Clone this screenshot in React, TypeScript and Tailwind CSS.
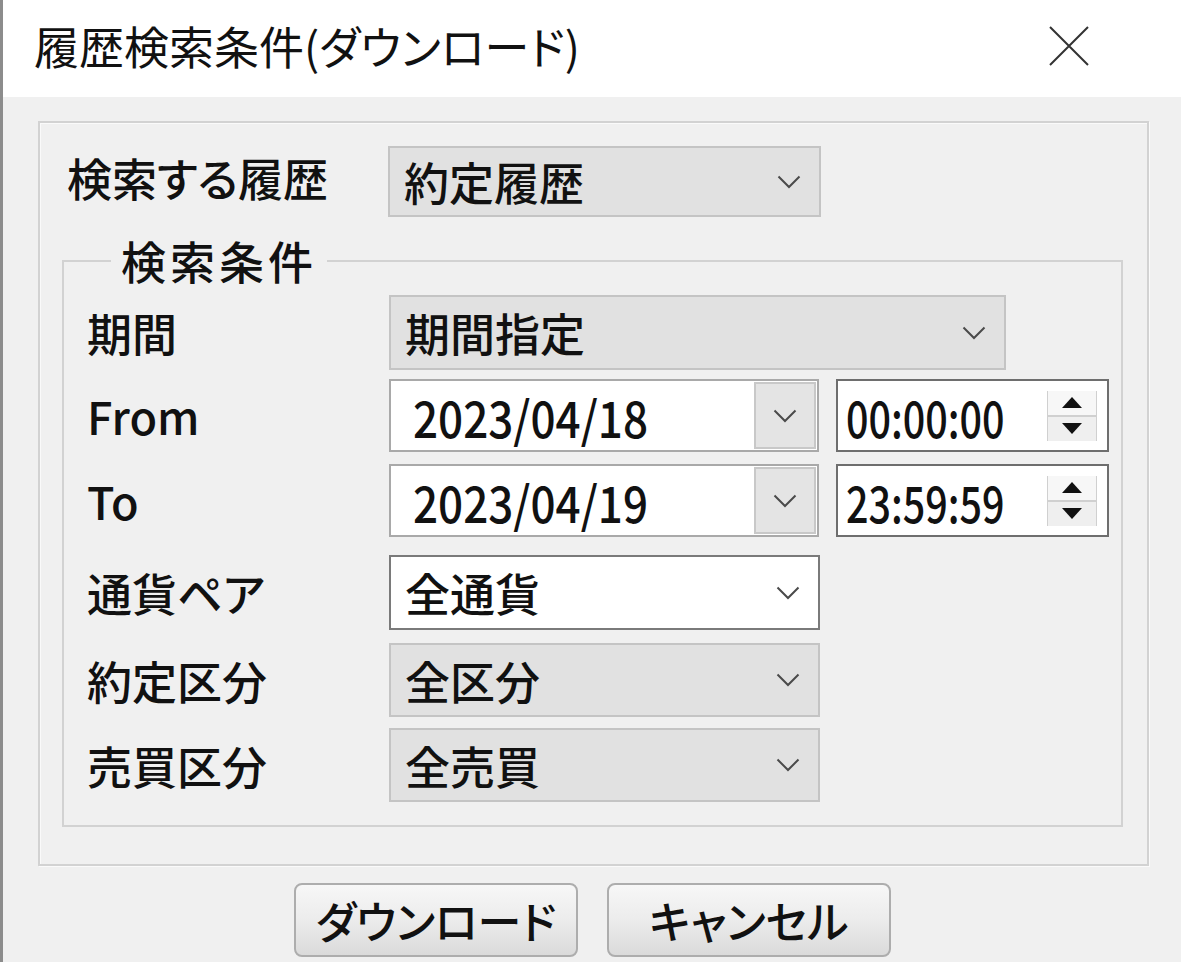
const FONT = "font-['Noto_Sans_CJK_JP','Noto_Sans',sans-serif] [font-feature-settings:'palt']";

function Chevron() {
  return (
    <svg width="24" height="14" viewBox="0 0 24 14" fill="none">
      <path d="M1.5 1.5 L12 12 L22.5 1.5" stroke="#4a4a4a" strokeWidth="2" />
    </svg>
  );
}

function Combo({ value, width, white }: { value: string; width: string; white?: boolean }) {
  return (
    <div
      className={`${width} h-full flex items-center justify-between border-2 ${
        white ? 'bg-white border-[#7a7a7a]' : 'bg-[#e1e1e1] border-[#c4c4c4]'
      } pl-[14px] pr-[18px]`}
    >
      <span className="text-[45px] leading-none font-medium text-[#111]">{value}</span>
      <Chevron />
    </div>
  );
}

function DateBox({ value }: { value: string }) {
  return (
    <div className="w-[430px] h-full flex border-2 border-[#a9a9a9] bg-white">
      <div className="flex-1 flex items-center pl-[22px]">
        <span className="inline-block text-[50px] leading-none font-medium text-[#111] scale-x-[0.88] origin-left">{value}</span>
      </div>
      <div className="w-[62px] flex items-center justify-center bg-[#e4e4e4] border-2 border-[#c8c8c8] m-[1px]">
        <Chevron />
      </div>
    </div>
  );
}

function TimeBox({ value }: { value: string }) {
  return (
    <div className="w-[273px] h-full flex items-center justify-between border-2 border-[#6e6e6e] bg-white pl-[8px] pr-[10px]">
      <span className="inline-block text-[50px] leading-none font-medium text-[#111] scale-x-[0.79] origin-left">{value}</span>
      <div className="w-[56px] h-[50px] flex flex-col">
        <div className="flex-1 flex items-center justify-center border-x border-b-2 border-[#d0d0d0] bg-[#f7f7f7]">
          <svg width="20" height="11" viewBox="0 0 20 11"><path d="M10 0 L20 11 L0 11 Z" fill="#111" /></svg>
        </div>
        <div className="flex-1 flex items-center justify-center border-x border-[#d0d0d0] bg-[#efefef]">
          <svg width="20" height="11" viewBox="0 0 20 11"><path d="M0 0 L20 0 L10 11 Z" fill="#111" /></svg>
        </div>
      </div>
    </div>
  );
}

function Row({ label, children, h, mt }: { label: string; children: React.ReactNode; h: string; mt: string }) {
  return (
    <div className={`flex items-center ${h} ${mt}`}>
      <div className="w-[302px] text-[45px] leading-none font-medium text-[#111]">{label}</div>
      <div className="flex items-center gap-[17px] h-full">{children}</div>
    </div>
  );
}

function Button({ label }: { label: string }) {
  return (
    <div className="w-[284px] h-[74px] flex items-center justify-center rounded-[8px] border-2 border-[#adadad] bg-gradient-to-b from-[#f7f7f7] via-[#ececec] to-[#dadada] text-[44px] leading-none font-medium text-[#111]">
      {label}
    </div>
  );
}

export default function App() {
  return (
    <div className={`w-[1181px] h-[962px] flex flex-col border-l-[3px] border-[#8c8c8c] overflow-hidden ${FONT}`}>
      <div className="h-[97px] bg-white flex items-center justify-between pl-[31px] pr-[92px] shrink-0">
        <span className="text-[45px] leading-none text-[#111] pb-[6px]">履歴検索条件(ダウンロード)</span>
        <svg width="40" height="40" viewBox="0 0 40 40" className="mb-[6px]">
          <path d="M1 1 L39 39 M39 1 L1 39" stroke="#333" strokeWidth="2" />
        </svg>
      </div>
      <div className="flex-1 bg-[#f0f0f0] flex flex-col pl-[35px] pt-[24px]">
        <div className="w-[1111px] h-[745px] border-2 border-[#d2d2d2] shadow-[inset_1px_1px_0_#fafafa,1px_1px_0_#fafafa] pl-[22px] pt-[23px]">
          <div className="flex items-center h-[71px] pl-[5px]">
            <div className="w-[321px] text-[45px] leading-none font-medium text-[#111] pb-[8px]">検索する履歴</div>
            <Combo value="約定履歴" width="w-[433px]" />
          </div>
          <fieldset className="w-[1061px] h-[590px] mt-[20px] border-2 border-[#d2d2d2] pl-[23px]">
            <legend className="ml-[24px] px-[10px] text-[45px] leading-[48px] tracking-[4px] font-medium text-[#111]">検索条件</legend>
            <Row label="期間" h="h-[75px]" mt="mt-[10px]">
              <Combo value="期間指定" width="w-[617px]" />
            </Row>
            <Row label="From" h="h-[73px]" mt="mt-[9px]">
              <DateBox value="2023/04/18" />
              <TimeBox value="00:00:00" />
            </Row>
            <Row label="To" h="h-[73px]" mt="mt-[12px]">
              <DateBox value="2023/04/19" />
              <TimeBox value="23:59:59" />
            </Row>
            <Row label="通貨ペア" h="h-[75px]" mt="mt-[18px]">
              <Combo value="全通貨" width="w-[431px]" white />
            </Row>
            <Row label="約定区分" h="h-[74px]" mt="mt-[13px]">
              <Combo value="全区分" width="w-[431px]" />
            </Row>
            <Row label="売買区分" h="h-[74px]" mt="mt-[11px]">
              <Combo value="全売買" width="w-[431px]" />
            </Row>
          </fieldset>
        </div>
        <div className="flex gap-[29px] pl-[256px] mt-[17px]">
          <Button label="ダウンロード" />
          <Button label="キャンセル" />
        </div>
      </div>
    </div>
  );
}
